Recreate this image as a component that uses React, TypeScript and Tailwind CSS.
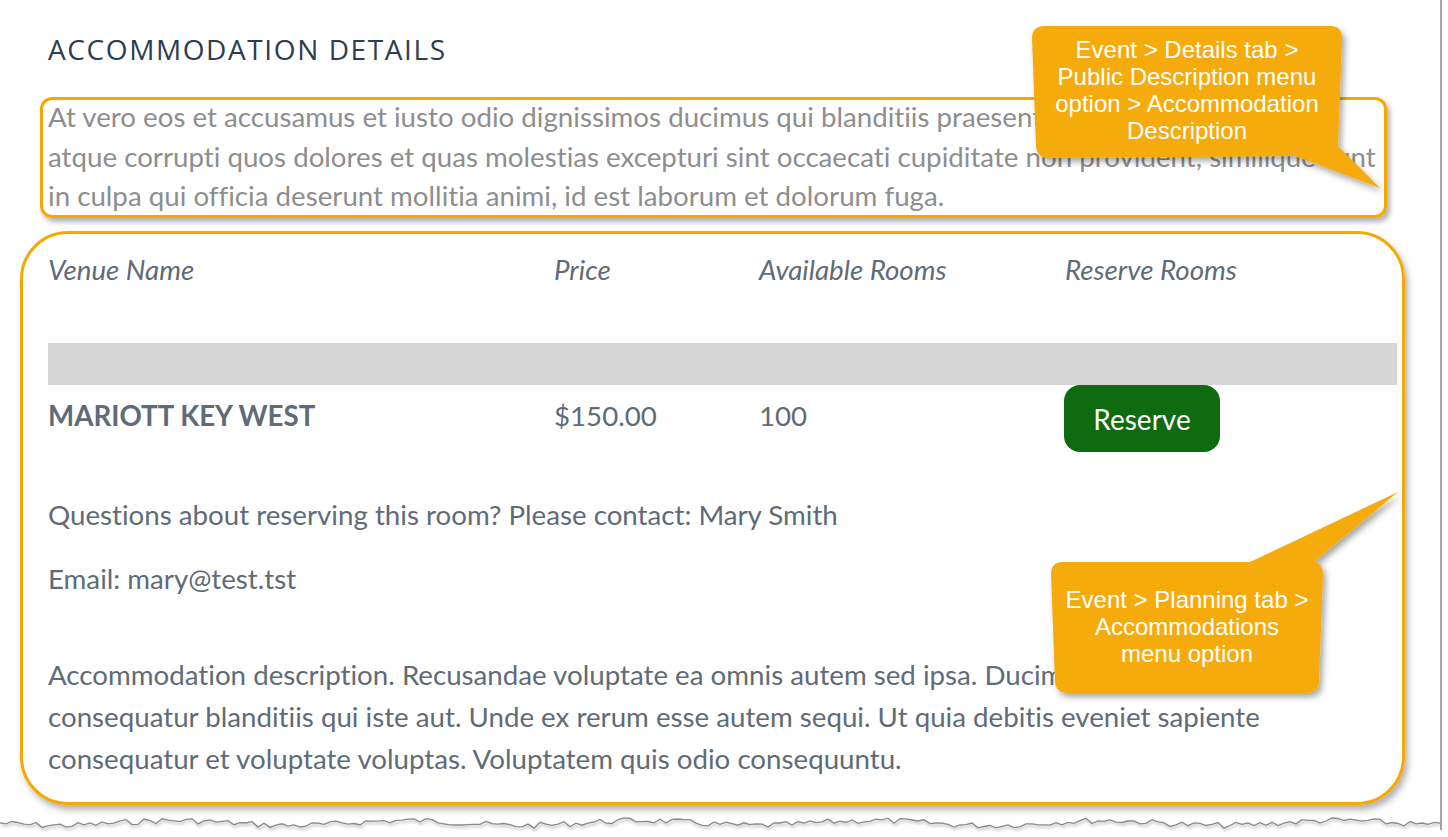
import React from 'react';

const slate = 'text-[#5f6b77]';

function tornEdge() {
  // deterministic jagged line for the torn bottom edge of the screenshot
  const pts: string[] = [];
  let seed = 7;
  const rnd = () => {
    seed = (seed * 9301 + 49297) % 233280;
    return seed / 233280;
  };
  for (let x = 0; x <= 1442; x += 6) {
    const y = 823 + Math.sin(x / 37) * 2.5 + (rnd() - 0.5) * 6;
    pts.push(`${x},${y.toFixed(1)}`);
  }
  return pts.join(' ');
}

export default function App() {
  return (
    <div className="relative h-[837px] w-[1448px] overflow-hidden bg-white font-['Lato',sans-serif] [font-variant-ligatures:none]">
      <div className="h-[830px] w-[1442px] border-r-2 border-[#a9a9a9] pt-[29px]">
        <h2 className="ml-[48px] font-['Open_Sans',sans-serif] text-[28px] font-normal leading-[40px] tracking-[1.6px] text-[#2c3e50]">
          ACCOMMODATION DETAILS
        </h2>

        <div className="ml-[40px] mt-[28px] h-[121px] w-[1347px] rounded-[12px] border-[3px] border-[#f5a800] pl-[5px] shadow-[3px_4px_5px_rgba(0,0,0,0.3)]">
          <p className="-mt-[3px] whitespace-nowrap text-[27.7px] leading-[39.5px] text-[#8e8e8e]">
            At vero eos et accusamus et iusto odio dignissimos ducimus qui blanditiis praesentium voluptatum deleniti
            <br />
            atque corrupti quos dolores et quas molestias excepturi sint occaecati cupiditate non provident, similique sunt
            <br />
            in culpa qui officia deserunt mollitia animi, id est laborum et dolorum fuga.
          </p>
        </div>

        <div className="ml-[20px] mt-[13px] h-[574px] w-[1385px] rounded-[48px] border-[3px] border-[#f5a800] pl-[25px] pr-[5px] pt-[16px] shadow-[3px_5px_6px_rgba(0,0,0,0.3)]">
          <div className={`grid grid-cols-[506px_205px_306px_1fr] text-[27.7px] italic leading-[40px] ${slate}`}>
            <span>Venue Name</span>
            <span>Price</span>
            <span>Available Rooms</span>
            <span>Reserve Rooms</span>
          </div>

          <div className="mt-[53px] h-[42px] bg-[#d6d6d6]" />

          <div className={`grid grid-cols-[506px_205px_305px_1fr] items-start text-[27.7px] leading-[40px] ${slate}`}>
            <span className="pt-[11px] font-bold">MARIOTT KEY WEST</span>
            <span className="pt-[11px]">$150.00</span>
            <span className="pt-[11px]">100</span>
            <div>
              <button className="h-[67px] w-[156px] rounded-[16px] bg-[#0e6b10] text-[28px] text-white">
                Reserve
              </button>
            </div>
          </div>

          <p className={`mt-[43px] text-[27.7px] leading-[40px] ${slate}`}>
            Questions about reserving this room? Please contact: Mary Smith
          </p>
          <p className={`mt-[24px] text-[27.7px] leading-[40px] ${slate}`}>Email: mary@test.tst</p>

          <p className={`mt-[55px] whitespace-nowrap text-[27.7px] leading-[42px] ${slate}`}>
            Accommodation description. Recusandae voluptate ea omnis autem sed ipsa. Ducimus quia
            <br />
            consequatur blanditiis qui iste aut. Unde ex rerum esse autem sequi. Ut quia debitis eveniet sapiente
            <br />
            consequatur et voluptate voluptas. Voluptatem quis odio consequuntu.
          </p>
        </div>
      </div>

      {/* torn bottom edge + callout shapes */}
      <svg className="pointer-events-none absolute left-0 top-0" width="1448" height="837">
        <defs>
          <filter id="tornShadow" x="-5%" y="-50%" width="110%" height="300%">
            <feDropShadow dx="1" dy="2" stdDeviation="1.5" floodColor="#000" floodOpacity="0.35" />
          </filter>
          <filter id="calloutShadow" x="-20%" y="-20%" width="140%" height="140%">
            <feDropShadow dx="3" dy="4" stdDeviation="3" floodColor="#000" floodOpacity="0.35" />
          </filter>
        </defs>
        <polyline points={tornEdge()} fill="none" stroke="#8a8a8a" strokeWidth="1.3" filter="url(#tornShadow)" />
        <path
          d="M1045,26 L1330,26 Q1342,26 1342,38 L1338,146 L1380,188 L1295,156 L1049,158 Q1037,158 1036,146 L1032,38 Q1032,26 1045,26 Z"
          fill="#f6ab0b"
          filter="url(#calloutShadow)"
        />
        <path
          d="M1063,562 L1250,562 L1398,492 L1315,561 Q1323,564 1323,575 L1319,682 Q1318,693 1306,693 L1068,693 Q1056,693 1055,682 L1051,574 Q1051,562 1063,562 Z"
          fill="#f6ab0b"
          filter="url(#calloutShadow)"
        />
      </svg>

      <div className="absolute left-[1032px] top-[36px] w-[310px] text-center font-['Liberation_Sans',Arial,sans-serif] text-[24px] leading-[27px] text-white">
        Event &gt; Details tab &gt;
        <br />
        Public Description menu
        <br />
        option &gt; Accommodation
        <br />
        Description
      </div>

      <div className="absolute left-[1051px] top-[586px] w-[272px] text-center font-['Liberation_Sans',Arial,sans-serif] text-[24px] leading-[27px] text-white">
        Event &gt; Planning tab &gt;
        <br />
        Accommodations
        <br />
        menu option
      </div>
    </div>
  );
}
